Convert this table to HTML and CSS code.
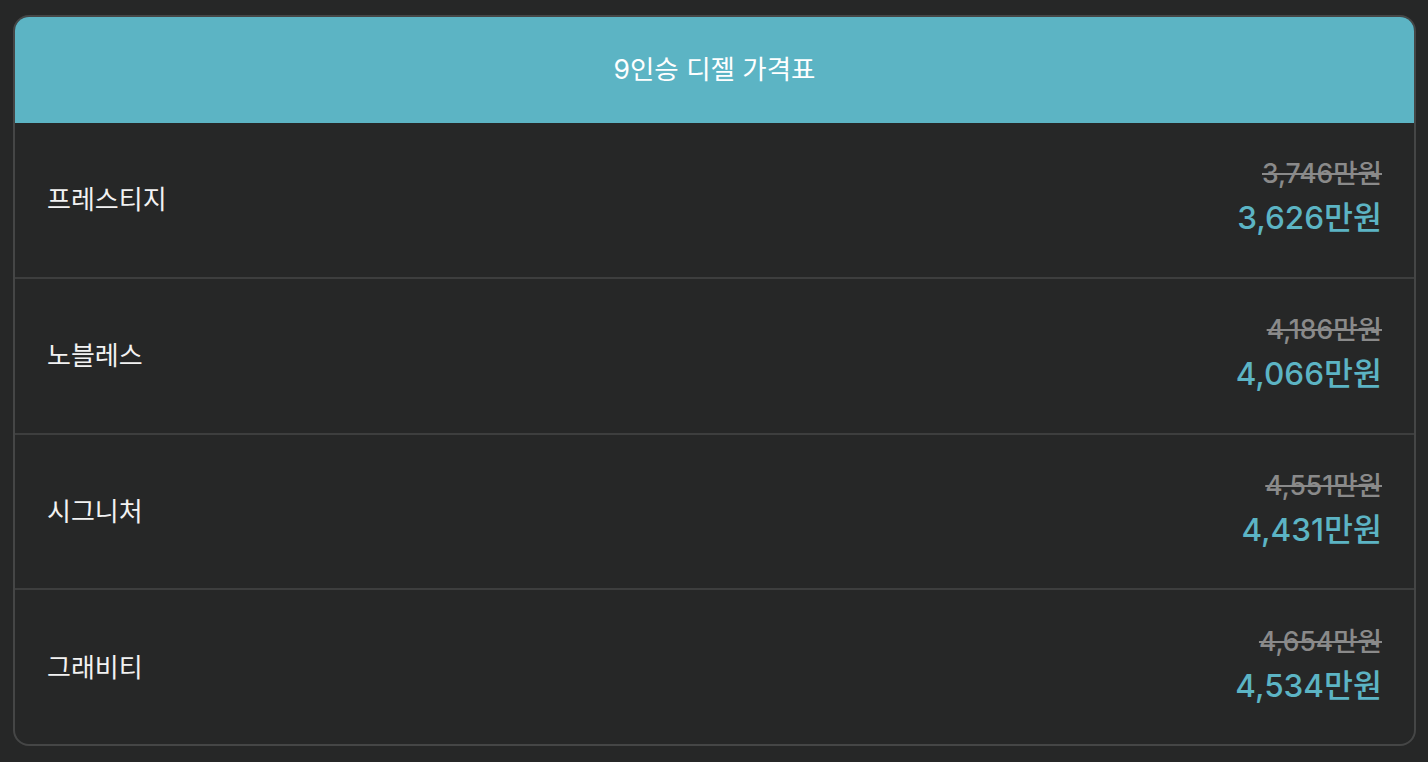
FILE: index.html
```html
<!DOCTYPE html>
<html lang="ko">
<head>
<meta charset="utf-8">
<link rel="stylesheet" href="styles.css">
</head>
<body>
<div class="card">
  <div class="head">9인승 디젤 가격표</div>
  <div class="row">
    <div class="name">프레스티지</div>
    <div class="price"><div class="old">3,746만원</div><div class="new">3,626만원</div></div>
  </div>
  <div class="row">
    <div class="name">노블레스</div>
    <div class="price"><div class="old">4,186만원</div><div class="new">4,066만원</div></div>
  </div>
  <div class="row">
    <div class="name">시그니처</div>
    <div class="price"><div class="old">4,551만원</div><div class="new">4,431만원</div></div>
  </div>
  <div class="row">
    <div class="name">그래비티</div>
    <div class="price"><div class="old">4,654만원</div><div class="new">4,534만원</div></div>
  </div>
</div>
</body>
</html>
```
FILE: styles.css
```css
html, body {
  margin: 0;
  background: #262727;
}
body {
  padding: 15px 12px 0 13px;
  font-family: Inter, "Noto Sans CJK KR", sans-serif;
}
.card {
  border: 2px solid #454646;
  border-radius: 16px;
  overflow: hidden;
  height: 731px;
  box-sizing: border-box;
  display: flex;
  flex-direction: column;
}
.head {
  height: 106px;
  flex: none;
  background: #5cb4c4;
  color: #fff;
  font-size: 26.5px;
  display: flex;
  align-items: center;
  justify-content: center;
  padding-bottom: 6px;
  box-sizing: border-box;
}
.row {
  flex: 1;
  display: flex;
  align-items: center;
  justify-content: space-between;
  padding: 0 32px 0 32px;
  border-top: 2px solid #3d3e3e;
}
.head + .row { border-top: none; }
.name {
  color: #f2f2f2;
  font-size: 26px;
  margin-top: -4px;
}
.price {
  text-align: right;
  display: flex;
  flex-direction: column;
  align-items: flex-end;
  margin-top: 0;
}
.old {
  color: #8a8a8a;
  font-size: 26.5px;
  line-height: 32px;
  font-weight: 500;
  text-decoration: line-through;
  text-decoration-thickness: 2px;
}
.new {
  color: #5cb4c4;
  font-size: 31.5px;
  line-height: 48px;
  margin-top: 5px;
  font-weight: 500;
}
```
